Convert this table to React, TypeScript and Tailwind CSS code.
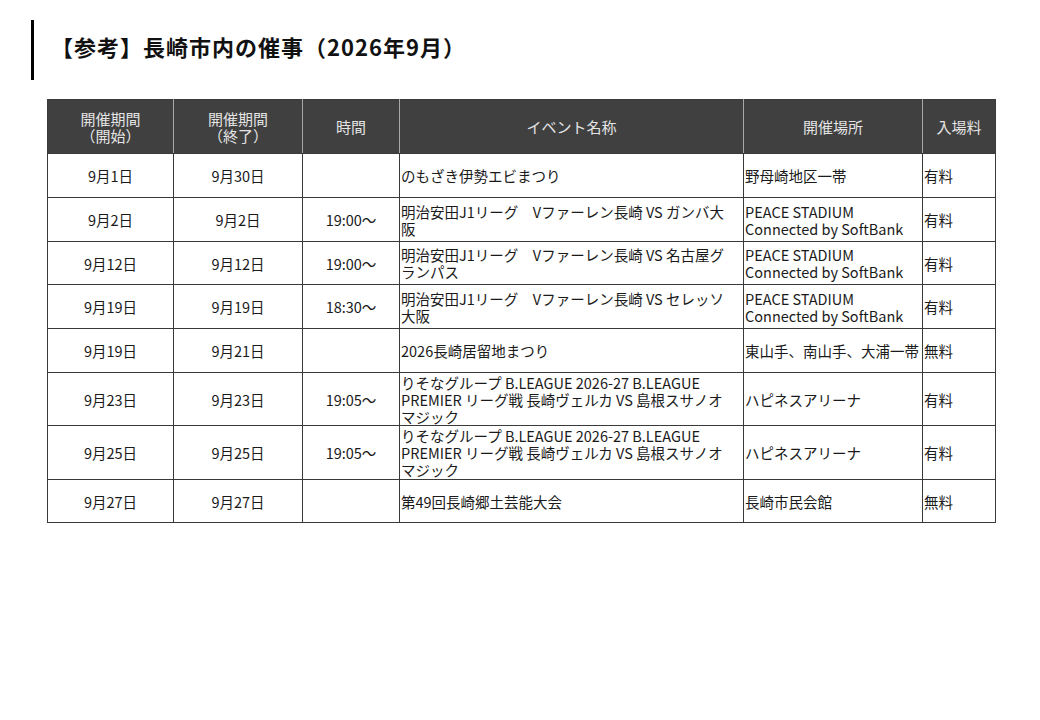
import React from "react";

type Row = {
  start: string;
  end: string;
  time: string;
  name: React.ReactNode;
  place: React.ReactNode;
  fee: string;
  h: string;
};

const rows: Row[] = [
  { start: "9月1日", end: "9月30日", time: "", name: "のもざき伊勢エビまつり", place: "野母崎地区一帯", fee: "有料", h: "h-[44px]" },
  {
    start: "9月2日", end: "9月2日", time: "19:00～",
    name: (<>明治安田J1リーグ　Vファーレン長崎 VS ガンバ大<br />阪</>),
    place: (<>PEACE STADIUM<br />Connected by SoftBank</>), fee: "有料", h: "h-[44px]",
  },
  {
    start: "9月12日", end: "9月12日", time: "19:00～",
    name: (<>明治安田J1リーグ　Vファーレン長崎 VS 名古屋グ<br />ランパス</>),
    place: (<>PEACE STADIUM<br />Connected by SoftBank</>), fee: "有料", h: "h-[43px]",
  },
  {
    start: "9月19日", end: "9月19日", time: "18:30～",
    name: (<>明治安田J1リーグ　Vファーレン長崎 VS セレッソ<br />大阪</>),
    place: (<>PEACE STADIUM<br />Connected by SoftBank</>), fee: "有料", h: "h-[44px]",
  },
  { start: "9月19日", end: "9月21日", time: "", name: "2026長崎居留地まつり", place: "東山手、南山手、大浦一帯", fee: "無料", h: "h-[44px]" },
  {
    start: "9月23日", end: "9月23日", time: "19:05～",
    name: (<>りそなグループ B.LEAGUE 2026-27 B.LEAGUE<br />PREMIER リーグ戦 長崎ヴェルカ VS 島根スサノオ<br />マジック</>),
    place: "ハピネスアリーナ", fee: "有料", h: "h-[53px]",
  },
  {
    start: "9月25日", end: "9月25日", time: "19:05～",
    name: (<>りそなグループ B.LEAGUE 2026-27 B.LEAGUE<br />PREMIER リーグ戦 長崎ヴェルカ VS 島根スサノオ<br />マジック</>),
    place: "ハピネスアリーナ", fee: "有料", h: "h-[54px]",
  },
  { start: "9月27日", end: "9月27日", time: "", name: "第49回長崎郷土芸能大会", place: "長崎市民会館", fee: "無料", h: "h-[43px]" },
];

export default function App() {
  return (
    <div className="w-[1040px] h-[720px] bg-white pt-[20px] font-[family-name:Noto_Sans_CJK_JP,Noto_Sans,sans-serif]">
      <div className="flex items-start pl-[31px]">
        <div className="w-[3px] h-[60px] bg-black" />
        <h1 className="ml-[17px] mt-[12px] text-[22px] leading-[28px] font-bold tracking-[1px] text-[#111] whitespace-nowrap">
          【参考】長崎市内の催事（2026年9月）
        </h1>
      </div>
      <div className="mt-[19px] ml-[47px]">
        <table className="border-collapse table-fixed w-[948px] text-[14.5px] leading-[17px]">
          <colgroup>
            <col className="w-[126px]" />
            <col className="w-[129px]" />
            <col className="w-[97px]" />
            <col className="w-[344px]" />
            <col className="w-[179px]" />
            <col className="w-[73px]" />
          </colgroup>
          <thead>
            <tr className="h-[54px] bg-[#404040] text-[#e4e4e4] text-[15px]">
              <th className="font-normal text-center border border-[#3a3a3a] border-r-[#a8a8a8]">開催期間<br />（開始）</th>
              <th className="font-normal text-center border border-[#3a3a3a] border-x-[#a8a8a8]">開催期間<br />（終了）</th>
              <th className="font-normal text-center border border-[#3a3a3a] border-x-[#a8a8a8]">時間</th>
              <th className="font-normal text-center border border-[#3a3a3a] border-x-[#a8a8a8]">イベント名称</th>
              <th className="font-normal text-center border border-[#3a3a3a] border-x-[#a8a8a8]">開催場所</th>
              <th className="font-normal text-center border border-[#3a3a3a] border-l-[#a8a8a8]">入場料</th>
            </tr>
          </thead>
          <tbody className="text-[#1a1a1a]">
            {rows.map((r, i) => (
              <tr key={i} className={r.h}>
                <td className="border border-[#3a3a3a] text-center align-middle">{r.start}</td>
                <td className="border border-[#3a3a3a] text-center align-middle">{r.end}</td>
                <td className="border border-[#3a3a3a] text-center align-middle">{r.time}</td>
                <td className="border border-[#3a3a3a] pl-[1px] align-middle whitespace-nowrap">{r.name}</td>
                <td className="border border-[#3a3a3a] pl-[1px] align-middle whitespace-nowrap">{r.place}</td>
                <td className="border border-[#3a3a3a] pl-[1px] align-middle whitespace-nowrap">{r.fee}</td>
              </tr>
            ))}
          </tbody>
        </table>
      </div>
    </div>
  );
}
